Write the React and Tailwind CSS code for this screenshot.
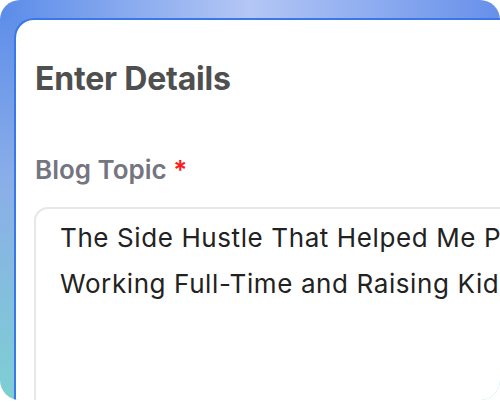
import React from 'react';

// gradient frame: horizontal sweep along the top, vertical blue→teal along the side
const FRAME_BG =
  '[background:linear-gradient(90deg,#5b8ce9_0%,#b4c7f5_50%,#6690ea_100%)_top/100%_20px_no-repeat,linear-gradient(180deg,#5b8ce9_0%,#8aaee8_45%,#7dcfd3_100%)]';

const App = () => {
  return (
    <div className="w-[500px] h-[402px] overflow-hidden bg-white font-['Inter','Liberation_Sans',sans-serif]">
      <div className={`w-[500px] h-[400px] rounded-[20px] overflow-hidden pl-[14px] pt-[18px] ${FRAME_BG}`}>
        <div className="w-[620px] h-[520px] bg-white border-l-2 border-t-2 border-[#3b78e7] rounded-tl-[20px] pl-[19px] pt-[39px]">
          <h2 className="text-[32px] leading-[40px] font-bold text-[#4f4f4f] tracking-[-0.2px]">
            Enter Details
          </h2>

          <label className="block mt-[55px] text-[26px] leading-[32px] font-semibold text-[#75757f]">
            Blog Topic <span className="text-[#ff1a1a]">*</span>
          </label>

          <div className="mt-[21px] -ml-[1px] w-[600px] h-[260px] border-2 border-[#e5e7eb] rounded-[14px] pl-[24px] pt-[6px] text-[26px] leading-[46px] tracking-[0.6px] text-[#222222] whitespace-nowrap">
            <div>The Side Hustle That Helped Me Pay Off Debt While</div>
            <div>Working Full-Time and Raising Kids</div>
          </div>
        </div>
      </div>
    </div>
  );
};

export default App;
